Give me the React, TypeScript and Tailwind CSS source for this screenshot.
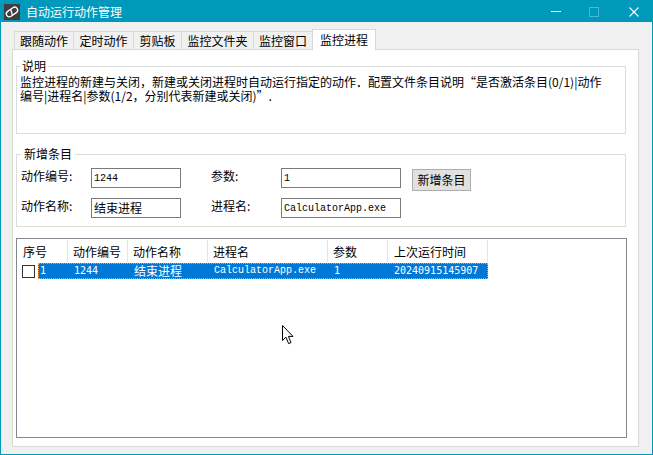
import React from 'react';

const TABS = [
  { label: '跟随动作', w: 'w-[60px]' },
  { label: '定时动作', w: 'w-[61px]' },
  { label: '剪贴板', w: 'w-[49px]' },
  { label: '监控文件夹', w: 'w-[73px]' },
  { label: '监控窗口', w: 'w-[60px]' },
];

const COLS = [
  { label: '序号', w: 'w-[51px]', pl: 'pl-[6px]' },
  { label: '动作编号', w: 'w-[60px]', pl: 'pl-[5px]' },
  { label: '动作名称', w: 'w-[80px]', pl: 'pl-[5px]' },
  { label: '进程名', w: 'w-[120px]', pl: 'pl-[5px]' },
  { label: '参数', w: 'w-[60px]', pl: 'pl-[5px]' },
  { label: '上次运行时间', w: 'w-[100px]', pl: 'pl-[6px]' },
];

function AppIcon() {
  return (
    <svg width="16" height="16" viewBox="0 0 16 16" className="shrink-0">
      <rect width="16" height="16" fill="#3f3f3f" />
      <g transform="rotate(-35 8 8)" fill="none" stroke="#fff" strokeWidth="1.3">
        <rect x="1.8" y="5" width="12.4" height="6" rx="3" />
        <line x1="8.5" y1="5" x2="6.5" y2="11" />
      </g>
    </svg>
  );
}

function Cursor() {
  return (
    <svg width="13" height="21" viewBox="0 0 13 21" className="absolute left-[281px] top-[324px]">
      <path
        d="M0.5 0.5 L0.5 15.5 L4 12.2 L6.6 18.6 L9 17.6 L6.4 11.4 L11 11.4 Z"
        fill="#fff"
        stroke="#000"
        strokeWidth="1"
        strokeLinejoin="miter"
      />
    </svg>
  );
}

export default function App() {
  return (
    <div className="relative w-[653px] h-[455px] overflow-hidden border border-[#0099bc] bg-[#f0f0f0] text-[12px] text-black font-['Noto_Sans_CJK_SC',sans-serif]">
      {/* title bar */}
      <div className="h-[21px] bg-[#0099bc] flex items-center pl-[3px] pr-[13px] text-white">
        <AppIcon />
        <span className="ml-[6px] leading-[14px] mt-[1px]">自动运行动作管理</span>
        <div className="ml-auto flex items-center">
          <div className="w-[10px] h-px bg-white" />
          <div className="ml-[28px] w-[10px] h-[10px] border border-[#4cb8d3]" />
          <svg width="10" height="10" viewBox="0 0 10 10" className="ml-[30px]">
            <path d="M0.5 0.5 L9.5 9.5 M9.5 0.5 L0.5 9.5" stroke="#fff" strokeWidth="1.1" />
          </svg>
        </div>
      </div>

      <div className="pl-[11px] pt-[7px]">
        {/* tabs */}
        <div className="flex items-end h-[20px] ml-[2px]">
          {TABS.map((t, i) => (
            <div
              key={t.label}
              className={`${t.w} ${i > 0 ? '-ml-px' : ''} h-[18px] border border-b-0 border-[#d9d9d9] bg-[#f0f0f0] flex items-center justify-center leading-[14px]`}
            >
              {t.label}
            </div>
          ))}
          <div className="relative z-10 -ml-px -mb-px w-[64px] h-[21px] border border-b-0 border-[#d9d9d9] bg-white flex items-start justify-center pt-[3px] leading-[14px]">
            监控进程
          </div>
        </div>

        {/* tab page */}
        <div className="w-[627px] h-[398px] border border-[#d9d9d9] bg-white">
          <fieldset className="ml-[3px] mt-[8px] w-[610px] border border-[#dcdcdc] px-[3px]">
            <legend className="px-[2px] leading-[16px]">说明</legend>
            <div className="h-[59px] pt-[1px] leading-[14px] whitespace-nowrap">
              <div>监控进程的新建与关闭，新建或关闭进程时自动运行指定的动作．配置文件条目说明“是否激活条目(0/1)|动作</div>
              <div>编号|进程名|参数(1/2，分别代表新建或关闭)”.</div>
            </div>
          </fieldset>

          <fieldset className="ml-[3px] mt-[12px] w-[610px] border border-[#dcdcdc] px-[4px]">
            <legend className="px-[3px] leading-[16px]">新增条目</legend>
            <div className="pt-[6px] pb-[8px] flex flex-col gap-[10px]">
              <div className="h-[20px] flex items-start">
                <span className="w-[70px] mt-[2px] leading-[12px]">动作编号:</span>
                <div className="w-[90px] h-[20px] border border-[#7a7a7a] bg-white pl-[2px] flex items-center font-['Liberation_Mono',monospace] text-[10px]">
                  1244
                </div>
                <span className="ml-[30px] w-[70px] mt-[2px] leading-[12px]">参数:</span>
                <div className="w-[120px] h-[20px] border border-[#7a7a7a] bg-white pl-[2px] flex items-center font-['Liberation_Mono',monospace] text-[10px]">
                  1
                </div>
                <button className="ml-[11px] mt-[1px] w-[59px] h-[22px] border border-[#adadad] bg-[#e1e1e1] flex items-center justify-center leading-[14px]">
                  新增条目
                </button>
              </div>
              <div className="h-[20px] flex items-start">
                <span className="w-[70px] mt-[2px] leading-[12px]">动作名称:</span>
                <div className="w-[90px] h-[20px] border border-[#7a7a7a] bg-white pl-[2px] flex items-center leading-[14px]">
                  结束进程
                </div>
                <span className="ml-[30px] w-[70px] mt-[2px] leading-[12px]">进程名:</span>
                <div className="w-[120px] h-[20px] border border-[#7a7a7a] bg-white pl-[2px] flex items-center font-['Liberation_Mono',monospace] text-[10px]">
                  CalculatorApp.exe
                </div>
              </div>
            </div>
          </fieldset>

          {/* list view */}
          <div className="ml-[3px] mt-[11px] w-[611px] h-[200px] border border-[#828790] bg-white">
            <div className="flex h-[24px] py-px">
              {COLS.map((c) => (
                <div
                  key={c.label}
                  className={`${c.w} ${c.pl} border-r border-[#e5e5e5] flex items-center pt-[2px] leading-[14px]`}
                >
                  {c.label}
                </div>
              ))}
            </div>
            <div className="flex items-center h-[16px]">
              <div className="ml-[5px] w-[13px] h-[13px] border border-[#333] bg-white" />
              <div className="ml-[3px] flex h-[16px] bg-[#0078d7] text-white outline outline-1 outline-dotted outline-[#f0a050] -outline-offset-1 leading-[14px]">
                <div className="w-[30px] pl-[2px] flex items-center font-['DejaVu_Sans_Mono',monospace] text-[10px]">1</div>
                <div className="w-[60px] pl-[6px] flex items-center font-['DejaVu_Sans_Mono',monospace] text-[10px]">1244</div>
                <div className="w-[80px] pl-[6px] flex items-center">结束进程</div>
                <div className="w-[120px] pl-[6px] flex items-center font-['Liberation_Mono',monospace] text-[10px]">CalculatorApp.exe</div>
                <div className="w-[60px] pl-[6px] flex items-center font-['DejaVu_Sans_Mono',monospace] text-[10px]">1</div>
                <div className="w-[100px] pl-[6px] flex items-center font-['DejaVu_Sans_Mono',monospace] text-[10px]">20240915145907</div>
              </div>
            </div>
          </div>
        </div>
      </div>

      <Cursor />
    </div>
  );
}
